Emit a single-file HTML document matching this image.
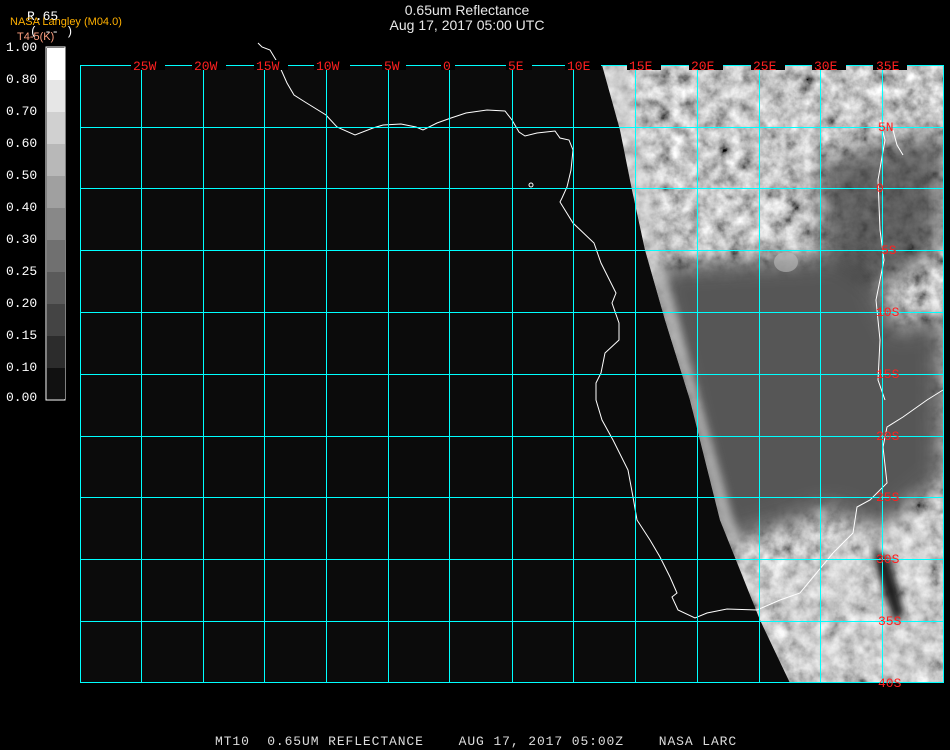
<!DOCTYPE html>
<html><head><meta charset="utf-8"><style>
html,body{margin:0;padding:0;background:#000;width:950px;height:750px;overflow:hidden;position:relative;font-family:"Liberation Sans",sans-serif}
.t{position:absolute;color:#e8e8e8;font-size:14px;white-space:nowrap}
.lab{position:absolute;font-family:"Liberation Mono",monospace;font-size:13px;color:#fff;left:6px}
.bot{position:absolute;left:215px;top:734px;font-family:"Liberation Mono",monospace;font-size:13px;color:#ddd;letter-spacing:0.9px;white-space:pre}
</style></head><body>
<div class="t" style="left:0;width:934px;text-align:center;top:2px">0.65um Reflectance</div>
<div class="t" style="left:0;width:934px;text-align:center;top:17px">Aug 17, 2017 05:00 UTC</div>
<div class="t" style="left:27px;top:9px;font-size:13px;font-family:'Liberation Mono',monospace;color:#fff">R.65</div>
<div class="t" style="left:10px;top:16px;font-size:11px;color:#ffb000">NASA Langley (M04.0)</div>
<div class="t" style="left:30px;top:25px;font-size:12px;font-family:'Liberation Mono',monospace;color:#fff">( -- )</div>
<div class="t" style="left:17px;top:31px;font-size:11px;color:#ffa080">T4-5(K)</div>

<div class="lab" style="top:40px">1.00</div>
<div class="lab" style="top:72px">0.80</div>
<div class="lab" style="top:104px">0.70</div>
<div class="lab" style="top:136px">0.60</div>
<div class="lab" style="top:168px">0.50</div>
<div class="lab" style="top:200px">0.40</div>
<div class="lab" style="top:232px">0.30</div>
<div class="lab" style="top:264px">0.25</div>
<div class="lab" style="top:296px">0.20</div>
<div class="lab" style="top:328px">0.15</div>
<div class="lab" style="top:360px">0.10</div>
<div class="lab" style="top:390px">0.00</div>

<svg width="950" height="750" style="position:absolute;left:0;top:0">
<defs>
<filter id="c" x="0" y="0" width="100%" height="100%">
<feTurbulence type="fractalNoise" baseFrequency="0.07" numOctaves="4" seed="7" result="t"/>
<feColorMatrix in="t" type="matrix" values="0.9 0.9 0 0 -0.35  0.9 0.9 0 0 -0.35  0.9 0.9 0 0 -0.35  0 0 0 0 1"/>
</filter>
<filter id="b"><feGaussianBlur stdDeviation="12"/></filter>
<filter id="b2"><feGaussianBlur stdDeviation="4"/></filter>
<clipPath id="sat"><polygon points="602,65 943,65 943,683 790,683 760,620 720,520 690,400 665,320 645,250 632,190 620,130"/></clipPath>
</defs>
<rect x="46" y="47" width="19" height="353" fill="#000" stroke="#fff" stroke-width="1"/>
<rect x="47" y="48" width="18" height="32" fill="#fff"/>
<rect x="47" y="80" width="18" height="32" fill="#e6e6e6"/>
<rect x="47" y="112" width="18" height="32" fill="#d0d0d0"/>
<rect x="47" y="144" width="18" height="32" fill="#b8b8b8"/>
<rect x="47" y="176" width="18" height="32" fill="#a0a0a0"/>
<rect x="47" y="208" width="18" height="32" fill="#888"/>
<rect x="47" y="240" width="18" height="32" fill="#707070"/>
<rect x="47" y="272" width="18" height="32" fill="#5a5a5a"/>
<rect x="47" y="304" width="18" height="32" fill="#444"/>
<rect x="47" y="336" width="18" height="32" fill="#2c2c2c"/>
<rect x="47" y="368" width="18" height="31" fill="#111"/>
<rect x="80" y="65" width="863" height="618" fill="#0b0b0b"/>
<g clip-path="url(#sat)">
<rect x="600" y="65" width="343" height="618" filter="url(#c)"/>
<g filter="url(#b)">
<polygon points="650,265 860,255 900,330 943,310 943,480 880,530 830,510 720,545 700,470" fill="#575757"/>
<polygon points="820,160 943,130 943,250 880,290 820,250" fill="#333" opacity="0.7"/>
<polygon points="760,570 943,510 943,683 800,683" fill="#e0e0e0" opacity="0.35"/>
</g>
<polygon points="602,65 625,65 660,250 700,400 745,560 790,683 780,683 760,620 720,520 690,400 665,320 645,250 632,190 620,130" fill="#d8d8d8" opacity="0.6" filter="url(#b2)"/>
<polygon points="872,545 890,560 905,615 893,620 878,575" fill="#1a1a1a" filter="url(#b2)"/>
<ellipse cx="786" cy="262" rx="12" ry="10" fill="#bbb" opacity="0.6"/>
</g>
<g fill="none" stroke="#fff" stroke-width="1">
<polyline points="258,43 262,47 270,50 279,65 287,83 294,95 305,102 326,115 337,127 355,135 373,128 383,125 401,124 416,127 423,130 437,123 451,118 466,113 487,110 505,111 512,120 519,132 525,136 537,133 555,131 560,138 569,140 573,150 571,170 567,187 562,198 560,202 573,223 594,243 601,263 616,293 612,303 619,323 619,340 605,353 601,373 596,383 596,400 602,420 613,440 628,470 633,497 637,520 650,540 660,557 670,577 677,593 672,597 678,610 695,618 707,613 727,609 757,610 780,600 800,593 833,553 853,533 857,507 870,500 887,483 883,447 887,427 903,417 927,400 943,390"/>
<polyline points="880,120 885,140 878,180 880,230 884,260 876,300 880,340 878,380 885,400"/>
<polyline points="893,130 897,145 903,155"/>
<ellipse cx="531" cy="185" rx="2" ry="2"/>
</g>
<g fill="#00ffff">
<rect x="80" y="65" width="863" height="1"/><rect x="80" y="682" width="864" height="1"/>
<rect x="80" y="65" width="1" height="618"/><rect x="943" y="65" width="1" height="618"/>
<rect x="141" y="65" width="1" height="618"/><rect x="203" y="65" width="1" height="618"/>
<rect x="264" y="65" width="1" height="618"/><rect x="326" y="65" width="1" height="618"/>
<rect x="388" y="65" width="1" height="618"/><rect x="449" y="65" width="1" height="618"/>
<rect x="512" y="65" width="1" height="618"/><rect x="573" y="65" width="1" height="618"/>
<rect x="635" y="65" width="1" height="618"/><rect x="697" y="65" width="1" height="618"/>
<rect x="759" y="65" width="1" height="618"/><rect x="820" y="65" width="1" height="618"/>
<rect x="882" y="65" width="1" height="618"/>
<rect x="80" y="127" width="863" height="1"/><rect x="80" y="188" width="863" height="1"/>
<rect x="80" y="250" width="863" height="1"/><rect x="80" y="312" width="863" height="1"/>
<rect x="80" y="374" width="863" height="1"/><rect x="80" y="436" width="863" height="1"/>
<rect x="80" y="497" width="863" height="1"/><rect x="80" y="559" width="863" height="1"/>
<rect x="80" y="621" width="863" height="1"/>
</g>
<g font-family="Liberation Mono, monospace" font-size="13" fill="#ff2020">
<g fill="#000">
<rect x="131" y="60" width="34" height="10"/><rect x="192" y="60" width="34" height="10"/><rect x="254" y="60" width="34" height="10"/><rect x="314" y="60" width="36" height="10"/><rect x="382" y="60" width="24" height="10"/><rect x="441" y="60" width="14" height="10"/><rect x="506" y="60" width="26" height="10"/><rect x="565" y="60" width="36" height="10"/><rect x="627" y="60" width="34" height="10"/><rect x="689" y="60" width="34" height="10"/><rect x="751" y="60" width="34" height="10"/><rect x="812" y="60" width="34" height="10"/><rect x="873" y="60" width="34" height="10"/>
</g>
<text x="133" y="70">25W</text><text x="194" y="70">20W</text><text x="256" y="70">15W</text><text x="316" y="70">10W</text><text x="384" y="70">5W</text><text x="443" y="70">0</text><text x="508" y="70">5E</text><text x="567" y="70">10E</text><text x="629" y="70">15E</text><text x="691" y="70">20E</text><text x="753" y="70">25E</text><text x="814" y="70">30E</text><text x="876" y="70">35E</text>
<text x="878" y="131">5N</text><text x="876" y="192">0</text><text x="881" y="254">5S</text><text x="876" y="316">10S</text><text x="876" y="378">15S</text><text x="876" y="440">20S</text><text x="876" y="501">25S</text><text x="876" y="563">30S</text><text x="878" y="625">35S</text><text x="878" y="687">40S</text>
</g>
</svg>
<div class="bot">MT10  0.65UM REFLECTANCE    AUG 17, 2017 05:00Z    NASA LARC</div>
</body></html>
